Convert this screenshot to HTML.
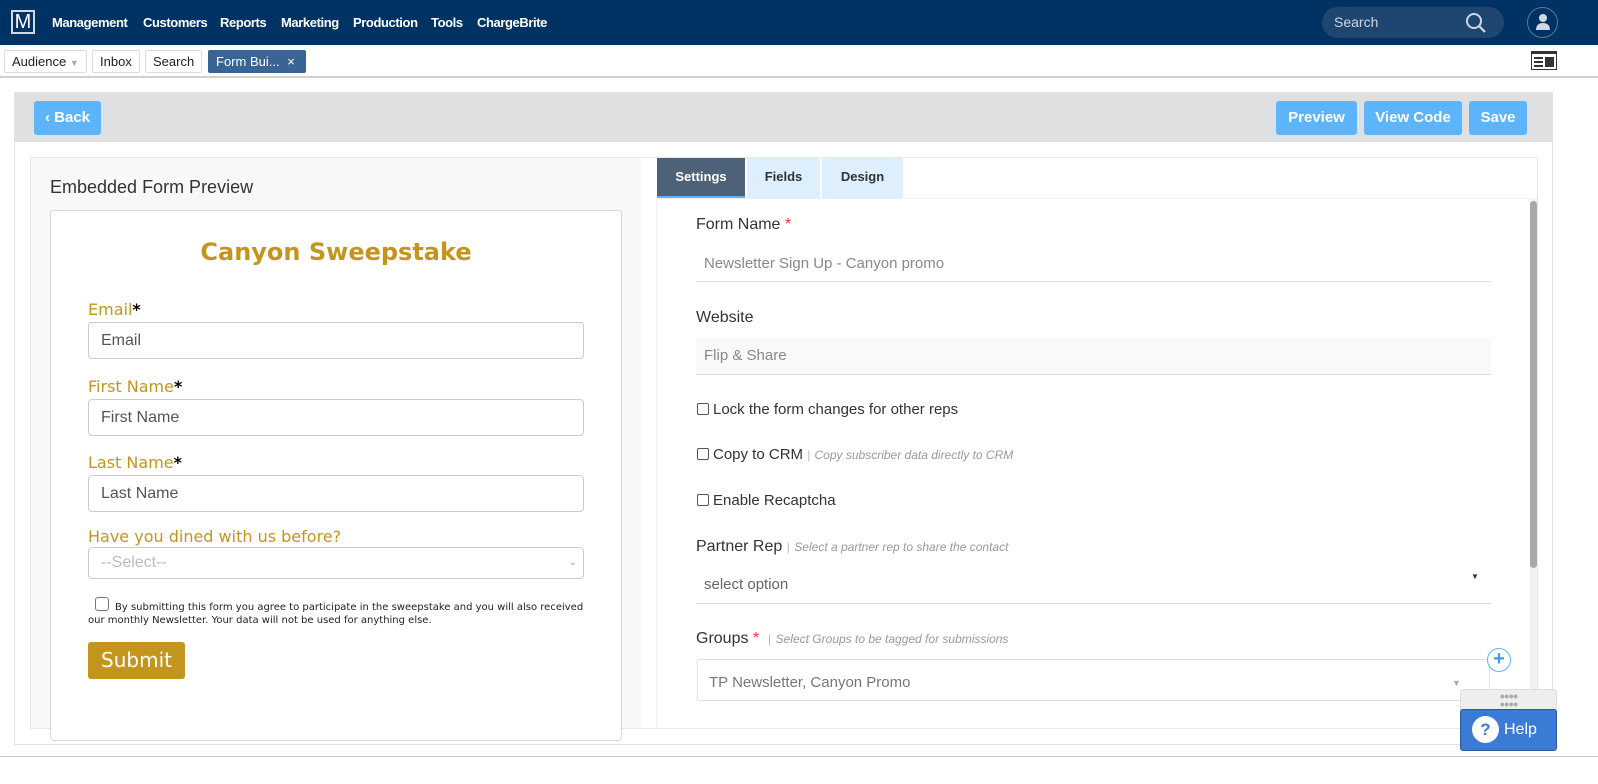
<!DOCTYPE html>
<html><head><meta charset="utf-8"><style>
*{box-sizing:border-box;margin:0;padding:0}
body{width:1598px;height:784px;overflow:hidden;background:#fff;font-family:"Liberation Sans",sans-serif;position:relative}
.a{position:absolute;white-space:nowrap}
.nav{left:0;top:0;width:1598px;height:45px;background:#003263}
.nav span.t{position:absolute;top:15px;color:#fff;font-size:13px;font-weight:bold;letter-spacing:-0.4px}
.tab{position:absolute;top:50px;height:23px;border:1px solid #ddd;border-radius:2px;font-size:13px;line-height:21px;padding:0 7px;color:#222;background:#fff;white-space:nowrap}
.btn{position:absolute;top:101px;height:34px;background:#5cb5fb;border-radius:3px;color:#fff;font-weight:bold;font-size:15px;line-height:34px;text-align:center}
.lbl{position:absolute;left:88px;color:#c4951e;font-size:16px;font-family:"DejaVu Sans",sans-serif}
.lbl b{color:#000;font-weight:bold}
.inp{position:absolute;left:88px;width:496px;height:37px;border:1px solid #ccc;border-radius:4px;font-size:16px;color:#555;padding:0 12px;line-height:35px}
.rl{position:absolute;left:696px;font-size:16px;color:#333;white-space:nowrap}
.hint{font-size:12px;color:#999;font-style:italic}
.cb{position:absolute;left:697px;font-size:15px;color:#333;white-space:nowrap}
.cb i{display:inline-block;width:12px;height:12px;border:1px solid #555;border-radius:2px;vertical-align:-1px;margin-right:4px}
.ul{position:absolute;left:696px;width:795px;border-bottom:1px solid #ddd}
</style></head><body>
<div class="a nav">
 <div class="a" style="left:11px;top:10px;width:24px;height:24px;border:2px solid #cfd8e3;color:#fff;font-size:20px;line-height:20px;text-align:center">M</div>
 <span class="t" style="left:52px">Management</span>
 <span class="t" style="left:143px">Customers</span>
 <span class="t" style="left:220px">Reports</span>
 <span class="t" style="left:281px">Marketing</span>
 <span class="t" style="left:353px">Production</span>
 <span class="t" style="left:431px">Tools</span>
 <span class="t" style="left:477px">ChargeBrite</span>
 <div class="a" style="left:1322px;top:7px;width:182px;height:31px;border-radius:16px;background:#1e4670;color:#cfd8e3;font-size:14px;line-height:31px;padding-left:12px">Search</div>
 <svg class="a" style="left:1464px;top:11px" width="24" height="24" viewBox="0 0 24 24"><circle cx="10" cy="10" r="7" fill="none" stroke="#cfd8e3" stroke-width="2"/><path d="M15 15L21 21" stroke="#cfd8e3" stroke-width="2.2"/></svg>
 <div class="a" style="left:1527px;top:7px;width:31px;height:31px;border-radius:50%;border:1px solid #5a7896"></div>
 <svg class="a" style="left:1533px;top:12px" width="20" height="20" viewBox="0 0 20 20"><circle cx="10" cy="6" r="4" fill="#cfd8e3"/><path d="M3 18c0-5 3-7 7-7s7 2 7 7z" fill="#cfd8e3"/></svg>
</div>
<div class="tab" style="left:4px;width:83px">Audience <span style="color:#aaa;font-size:9px">&#9660;</span></div>
<div class="tab" style="left:92px">Inbox</div>
<div class="tab" style="left:145px">Search</div>
<div class="tab" style="left:208px;width:98px;background:#3a6593;border-color:#3a6593;color:#fff">Form Bui... <span style="margin-left:4px">&#215;</span></div>
<svg class="a" style="left:1531px;top:51px" width="26" height="19" viewBox="0 0 26 19"><rect x="0.5" y="0.5" width="25" height="18" fill="#fff" stroke="#333"/><rect x="0" y="0" width="26" height="3" fill="#333"/><rect x="3" y="6" width="9" height="2" fill="#333"/><rect x="3" y="10" width="9" height="2" fill="#333"/><rect x="3" y="14" width="9" height="2" fill="#333"/><rect x="14" y="6" width="9" height="10" fill="#333"/></svg>
<div class="a" style="left:0;top:76px;width:1598px;height:2px;background:#d0d0d0"></div>
<div class="a" style="left:14px;top:92px;width:1539px;height:653px;background:#fff;border:1px solid #e3e3e3"></div>
<div class="a" style="left:15px;top:93px;width:1537px;height:49px;background:#dfe0e2"></div>
<div class="btn" style="left:34px;width:67px">&#8249; Back</div>
<div class="btn" style="left:1276px;width:81px">Preview</div>
<div class="btn" style="left:1364px;width:98px">View Code</div>
<div class="btn" style="left:1469px;width:58px">Save</div>
<div class="a" style="left:30px;top:157px;width:1508px;height:572px;border:1px solid #e8e8e8;background:#fff"></div>
<div class="a" style="left:31px;top:158px;width:610px;height:570px;background:#f7f8fa"></div>
<div class="a" style="left:50px;top:177px;font-size:18px;color:#333">Embedded Form Preview</div>
<div class="a" style="left:50px;top:210px;width:572px;height:531px;border:1px solid #d8d8d8;border-radius:4px;background:#fff"></div>
<div class="a" style="left:50px;top:238px;width:572px;text-align:center;font-family:'DejaVu Sans',sans-serif;font-weight:bold;font-size:24px;color:#c4951e">Canyon Sweepstake</div>
<div class="lbl" style="top:300px">Email<b>*</b></div>
<div class="inp" style="top:322px">Email</div>
<div class="lbl" style="top:377px">First Name<b>*</b></div>
<div class="inp" style="top:399px">First Name</div>
<div class="lbl" style="top:453px">Last Name<b>*</b></div>
<div class="inp" style="top:475px">Last Name</div>
<div class="lbl" style="top:527px">Have you dined with us before?</div>
<div class="inp" style="top:547px;height:32px;line-height:30px;color:#bbb">--Select--<span style="position:absolute;right:6px;font-size:10px;color:#999">&#8964;</span></div>
<div class="a" style="left:95px;top:597px;width:14px;height:14px;border:1px solid #777;border-radius:3px"></div>
<div class="a" style="left:88px;top:601px;width:500px;white-space:normal;font-family:'DejaVu Sans',sans-serif;font-size:10px;line-height:13px;color:#222;text-indent:27px">By submitting this form you agree to participate in the sweepstake and you will also received our monthly Newsletter. Your data will not be used for anything else.</div>
<div class="a" style="left:88px;top:642px;width:97px;height:37px;background:#c4951e;border-radius:3px;color:#fff;font-size:20px;line-height:37px;text-align:center;font-family:'DejaVu Sans',sans-serif">Submit</div>
<div class="a" style="left:657px;top:158px;width:88px;height:41px;background:#4d6178;color:#fff;font-weight:bold;font-size:13px;line-height:38px;text-align:center;border-bottom:3px solid #5cb5fb">Settings</div>
<div class="a" style="left:747px;top:158px;width:73px;height:40px;background:#ddeefd;color:#333;font-weight:bold;font-size:13px;line-height:38px;text-align:center">Fields</div>
<div class="a" style="left:822px;top:158px;width:81px;height:40px;background:#ddeefd;color:#333;font-weight:bold;font-size:13px;line-height:38px;text-align:center">Design</div>
<div class="a" style="left:657px;top:198px;width:880px;height:1px;background:#eee"></div>
<div class="a" style="left:656px;top:198px;width:1px;height:530px;background:#eee"></div>
<div class="a" style="left:1530px;top:198px;width:7px;height:530px;background:#f1f1f1"></div>
<div class="a" style="left:1530px;top:201px;width:7px;height:367px;background:#a8a8a8;border-radius:4px"></div>
<div class="rl" style="top:216px">Form Name <span style="color:#e33">*</span></div>
<div class="a" style="left:704px;top:255px;font-size:15px;color:#888">Newsletter Sign Up - Canyon promo</div>
<div class="ul" style="top:281px"></div>
<div class="rl" style="top:309px">Website</div>
<div class="a" style="left:696px;top:338px;width:795px;height:37px;background:#f9f9f9;border-bottom:1px solid #ddd;font-size:15px;color:#888;padding-left:8px;line-height:35px">Flip &amp; Share</div>
<div class="cb" style="top:401px"><i></i>Lock the form changes for other reps</div>
<div class="cb" style="top:446px"><i></i>Copy to CRM <span class="hint" style="font-style:normal;color:#bbb">|</span> <span class="hint">Copy subscriber data directly to CRM</span></div>
<div class="cb" style="top:492px"><i></i>Enable Recaptcha</div>
<div class="rl" style="top:538px">Partner Rep <span class="hint" style="font-style:normal;color:#bbb">|</span> <span class="hint">Select a partner rep to share the contact</span></div>
<div class="a" style="left:704px;top:576px;font-size:15px;color:#666">select option</div>
<div class="a" style="left:1471px;top:572px;font-size:8px;color:#333">&#9660;</div>
<div class="ul" style="top:603px"></div>
<div class="rl" style="top:630px">Groups <span style="color:#e33">*</span> &nbsp;<span class="hint" style="font-style:normal;color:#bbb">|</span> <span class="hint">Select Groups to be tagged for submissions</span></div>
<div class="a" style="left:697px;top:659px;width:793px;height:42px;border:1px solid #e3e3e3;border-radius:3px"></div>
<div class="a" style="left:709px;top:674px;font-size:15px;color:#777">TP Newsletter, Canyon Promo</div>
<div class="a" style="left:1452px;top:678px;font-size:9px;color:#aaa">&#9660;</div>
<div class="a" style="left:1487px;top:648px;width:24px;height:24px;border:1px solid #5cb5fb;border-radius:50%;color:#3a9bf0;font-size:20px;line-height:21px;text-align:center;font-weight:bold;background:#fff">+</div>
<div class="a" style="left:1460px;top:689px;width:97px;height:21px;background:#eee;border:1px solid #ddd;border-radius:3px 3px 0 0;color:#aaa;font-size:9px;text-align:center;line-height:8px;padding-top:2px;letter-spacing:-1px;white-space:normal">&#9679;&#9679;&#9679;&#9679;<br>&#9679;&#9679;&#9679;&#9679;</div>
<div class="a" style="left:1460px;top:709px;width:97px;height:42px;background:#3a7bd5;border:1px solid #2a5a9a;border-radius:3px;color:#fff;font-size:16px;line-height:40px;padding-left:43px">Help</div>
<div class="a" style="left:1472px;top:716px;width:27px;height:27px;background:#fff;border-radius:50%;color:#3a7bd5;font-weight:bold;font-size:17px;line-height:27px;text-align:center">?</div>
<div class="a" style="left:0;top:756px;width:1598px;height:1px;background:#ccc"></div>
</body></html>
